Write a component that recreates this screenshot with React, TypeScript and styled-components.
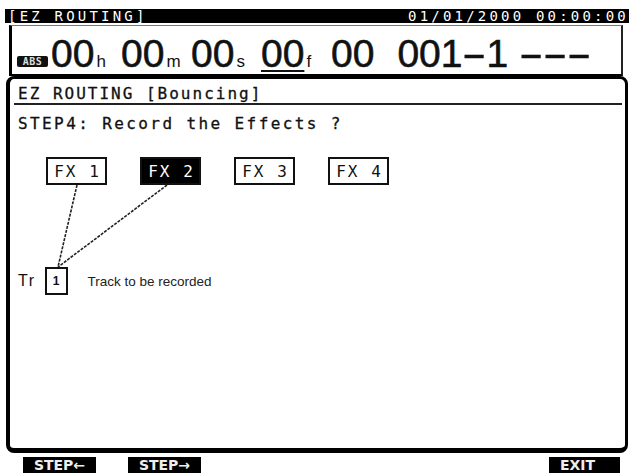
import React from 'react'
import styled, { createGlobalStyle } from 'styled-components'

const GlobalStyle = createGlobalStyle`
  html, body {
    margin: 0;
    padding: 0;
    background: #fff;
  }
  body {
    width: 629px;
    height: 476px;
    overflow: hidden;
    font-family: "DejaVu Sans Mono", "Liberation Mono", monospace;
    color: #111;
  }
`

const Screen = styled.div`
  display: flex;
  flex-direction: column;
`

const TitleBar = styled.div`
  margin: 9px 0 0 5px;
  height: 14px;
  padding: 0 0 0 3px;
  background: #000;
  color: #fff;
  display: flex;
  justify-content: space-between;
  align-items: center;
  font-size: 14px;
  line-height: 14px;
  letter-spacing: 3.2px;
`

const TimeBox = styled.div`
  margin: 2px 6px 0 9px;
  height: 51px;
  box-sizing: border-box;
  border-top: 1px solid #777;
  border-left: 3px solid #000;
  border-right: 2px solid #222;
  border-bottom: 2px solid #000;
  padding: 8px 0 1px 5px;
  display: flex;
  align-items: baseline;
  font-family: "Liberation Sans", Arial, sans-serif;
  color: #111;
`

const AbsBadge = styled.span`
  align-self: flex-end;
  margin-bottom: 6px;
  width: 31px;
  height: 11px;
  border-radius: 2px;
  background: #111;
  color: #ddd;
  font-family: "DejaVu Sans Mono", monospace;
  font-weight: bold;
  font-size: 10px;
  line-height: 11px;
  text-align: center;
  letter-spacing: 0.5px;
  margin-right: 3px;
`

const Seg = styled.span<{ $w?: number }>`
  display: inline-flex;
  align-items: baseline;
  width: ${(p) => (p.$w ? `${p.$w}px` : 'auto')};
`

const Digits = styled.span<{ $under?: boolean; $ml?: number }>`
  font-size: 39px;
  line-height: 39px;
  margin-left: ${(p) => p.$ml ?? 0}px;
  text-decoration: ${(p) => (p.$under ? 'underline' : 'none')};
  text-decoration-thickness: 2px;
  text-underline-offset: 3px;
  -webkit-text-stroke: 0.6px #111;
`

const Unit = styled.span`
  font-size: 17px;
  margin-left: 2px;
`

const Dash = styled.span`
  display: inline-block;
  width: 24px;
  text-align: center;
  transform: scaleX(1.9);
`

const Panel = styled.div`
  margin: 0 1px 0 6px;
  height: 377px;
  box-sizing: border-box;
  border: 3px solid #000;
  border-left-width: 4px;
  border-bottom-width: 5px;
  border-radius: 8px;
`

const Header = styled.div`
  margin: 0 3px 0 4px;
  padding: 7px 0 1px 4px;
  border-bottom: 2px solid #222;
  font-size: 16px;
  line-height: 16px;
  letter-spacing: 2px;
  -webkit-text-stroke: 0.3px #111;
`

const Prompt = styled.div`
  margin: 11px 0 0 8px;
  font-size: 16px;
  line-height: 16px;
  letter-spacing: 2.4px;
  -webkit-text-stroke: 0.3px #111;
`

const Diagram = styled.div`
  position: relative;
  margin-top: 25px;
  height: 138px;
`

const Wires = styled.svg`
  position: absolute;
  left: 0;
  top: 0;
  width: 100%;
  height: 100%;
  pointer-events: none;
`

const FxRow = styled.div`
  display: flex;
  gap: 33px;
  padding-left: 36px;
`

const FxBox = styled.div<{ $active?: boolean }>`
  width: 61px;
  height: 28px;
  box-sizing: border-box;
  border: 2px solid #111;
  background: ${(p) => (p.$active ? '#000' : '#fff')};
  color: ${(p) => (p.$active ? '#fff' : '#111')};
  display: flex;
  align-items: center;
  justify-content: center;
  padding-left: 2px;
  font-size: 16px;
  letter-spacing: 2px;
`

const TrRow = styled.div`
  display: flex;
  align-items: center;
  margin-top: 82px;
  padding-left: 8px;
  font-family: "Liberation Sans", Arial, sans-serif;
`

const TrLabel = styled.span`
  font-size: 16px;
  letter-spacing: 1.5px;
`

const TrBox = styled.div`
  margin-left: 9px;
  width: 23px;
  height: 28px;
  box-sizing: border-box;
  border: 2px solid #111;
  display: flex;
  align-items: center;
  justify-content: center;
  font-weight: bold;
  font-size: 12px;
`

const TrNote = styled.span`
  margin-left: 20px;
  font-size: 13.5px;
  color: #222;
`

const Footer = styled.div`
  display: flex;
  margin-top: 4px;
  padding: 0 9px 0 23px;
  gap: 32px;
`

const SoftKey = styled.div<{ $right?: boolean }>`
  width: ${(p) => (p.$right ? 71 : 73)}px;
  height: 16px;
  margin-left: ${(p) => (p.$right ? 'auto' : '0')};
  padding-right: ${(p) => (p.$right ? 14 : 0)}px;
  box-sizing: border-box;
  background: #000;
  color: #eee;
  font-family: "DejaVu Sans", Arial, sans-serif;
  font-weight: bold;
  font-size: 14px;
  line-height: 16px;
  text-align: center;
`

const fxSlots = ['FX 1', 'FX 2', 'FX 3', 'FX 4']

export default function App() {
  return (
    <Screen>
      <GlobalStyle />
      <TitleBar>
        <span>[EZ ROUTING]</span>
        <span>01/01/2000 00:00:00</span>
      </TitleBar>
      <TimeBox>
        <AbsBadge>ABS</AbsBadge>
        <Seg $w={70}>
          <Digits>00</Digits>
          <Unit>h</Unit>
        </Seg>
        <Seg $w={70}>
          <Digits>00</Digits>
          <Unit>m</Unit>
        </Seg>
        <Seg $w={70}>
          <Digits>00</Digits>
          <Unit>s</Unit>
        </Seg>
        <Seg $w={70}>
          <Digits $under>00</Digits>
          <Unit>f</Unit>
        </Seg>
        <Digits>00</Digits>
        <Digits $ml={23}>
          001<Dash>-</Dash>1
        </Digits>
        <Digits $ml={11}>
          <Dash>-</Dash>
          <Dash>-</Dash>
          <Dash>-</Dash>
        </Digits>
      </TimeBox>
      <Panel>
        <Header>EZ ROUTING [Bouncing]</Header>
        <Prompt>STEP4: Record the Effects ?</Prompt>
        <Diagram>
          <FxRow>
            {fxSlots.map((fx) => (
              <FxBox key={fx} $active={fx === 'FX 2'}>
                {fx}
              </FxBox>
            ))}
          </FxRow>
          <TrRow>
            <TrLabel>Tr</TrLabel>
            <TrBox>1</TrBox>
            <TrNote>Track to be recorded</TrNote>
          </TrRow>
          <Wires>
            <line x1={67} y1={28} x2={48} y2={110} stroke="#222" strokeWidth={1.6} strokeDasharray="3 1.2" />
            <line x1={157} y1={28} x2={48} y2={110} stroke="#222" strokeWidth={1.6} strokeDasharray="3 1.2" />
          </Wires>
        </Diagram>
      </Panel>
      <Footer>
        <SoftKey>STEP←</SoftKey>
        <SoftKey>STEP→</SoftKey>
        <SoftKey $right>EXIT</SoftKey>
      </Footer>
    </Screen>
  )
}
